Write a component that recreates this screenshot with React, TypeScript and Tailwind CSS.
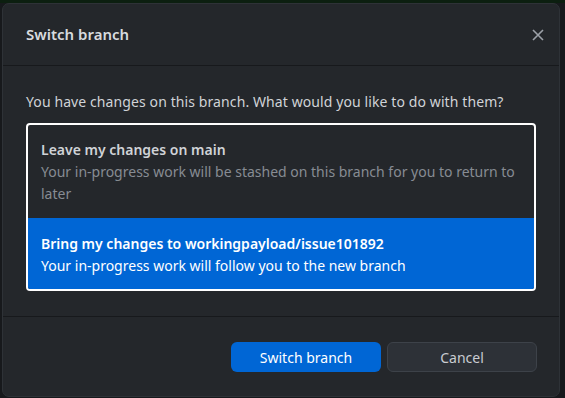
import React from "react";

export default function App() {
    return (
        <div className="w-[565px] h-[398px] overflow-hidden bg-[#17191c] font-['Noto_Sans',sans-serif]">
            <div className="h-[3px] bg-[#0c1f10]" />
            <div className="ml-[2px] w-[558px] h-[394px] rounded-[7px] bg-[#24272b] border border-[#2e3237] flex flex-col">
                {/* Header */}
                <div className="h-[62px] shrink-0 flex items-center justify-between pl-[23px] pr-[15px] border-b border-[#17191c]">
                    <span className="text-[15px] font-semibold text-[#d8dbdf]">Switch branch</span>
                    <svg width="12" height="12" viewBox="0 0 12 12" className="text-[#9ca1a8]">
                        <path d="M1 1L11 11M11 1L1 11" stroke="currentColor" strokeWidth="1.6" />
                    </svg>
                </div>

                {/* Body */}
                <div className="pt-[26px] pb-[25px] px-[23px] border-b border-[#17191c]">
                    <p className="text-[14px] leading-[20px] tracking-[0.1px] text-[#d0d3d7]">
                        You have changes on this branch. What would you like to do with them?
                    </p>
                    <div className="mt-[11px] border-2 border-white rounded-[4px] overflow-hidden">
                        <div className="px-[13px] pt-[14px] pb-[13px] text-[14px] leading-[22px]">
                            <div className="font-semibold text-[#d0d3d7]">Leave my changes on main</div>
                            <div className="text-[#878c93]">
                                Your in-progress work will be stashed on this branch for you to return to later
                            </div>
                        </div>
                        <div className="px-[13px] pt-[15px] pb-[12px] text-[14px] leading-[22px] bg-[#0066d5] text-white">
                            <div className="font-semibold">Bring my changes to workingpayload/issue101892</div>
                            <div>Your in-progress work will follow you to the new branch</div>
                        </div>
                    </div>
                </div>

                {/* Footer */}
                <div className="flex justify-end gap-[6px] pt-[25px] pr-[22px]">
                    <button className="w-[150px] h-[30px] rounded-[6px] bg-[#0066d5] text-white text-[14px]">
                        Switch branch
                    </button>
                    <button className="w-[150px] h-[30px] rounded-[6px] bg-[#2d3137] border border-[#3d4249] text-[#c9ccd1] text-[14px]">
                        Cancel
                    </button>
                </div>
            </div>
        </div>
    );
}
